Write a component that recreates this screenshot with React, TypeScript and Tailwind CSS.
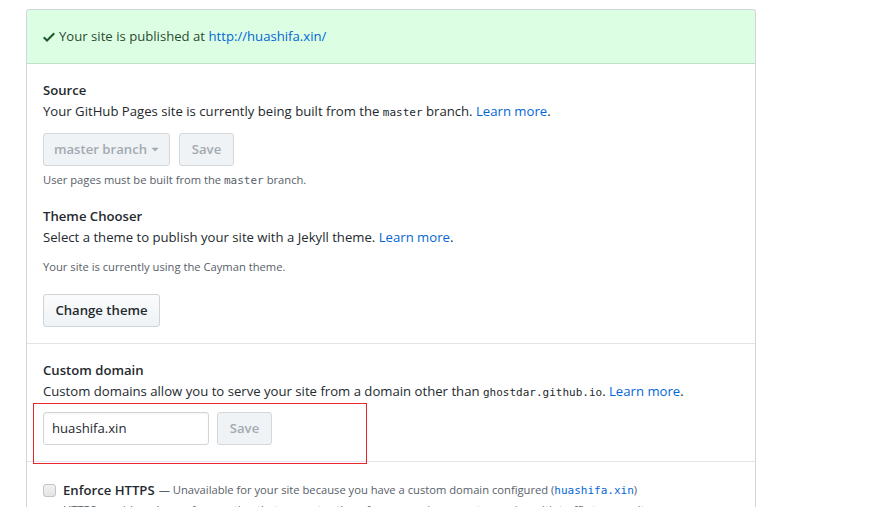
import React from "react";

const sans = { fontFamily: '"Open Sans", "Noto Sans", Arial, sans-serif' };

function Mono({ children, className = "" }: { children: React.ReactNode; className?: string }) {
  return (
    <span className={`font-['DejaVu_Sans_Mono',monospace] text-[11px] ${className}`}>{children}</span>
  );
}

function Check() {
  return (
    <svg width="12" height="16" viewBox="0 0 12 16" className="inline-block mr-[4px]" aria-hidden>
      <path d="M12 5l-8 8-4-4 1.5-1.5L4 10l6.5-6.5L12 5z" fill="#1d5a2a" />
    </svg>
  );
}

function Caret() {
  return (
    <svg width="8" height="16" viewBox="0 0 8 16" className="inline-block ml-[4px]" aria-hidden>
      <path d="M0 7l4 4 4-4H0z" fill="#a3aab1" transform="translate(0.5,-0.5) scale(0.9)" />
    </svg>
  );
}

export default function App() {
  return (
    <div className="min-h-[507px] bg-white pt-[9px] pl-[26px] text-[#24292e]" style={sans}>
      <div className="w-[730px] rounded-t-[3px] border border-[#d1d5da] border-b-0">
        {/* Flash */}
        <div className="flex items-center rounded-t-[3px] bg-[#dcffe4] border-b border-[#c2dfc8] px-4 py-4 text-[13.15px] leading-[21px] text-[#2c4a31]">
          <Check />
          <span>
            Your site is published at{" "}
            <span className="text-[#0366d6]">http://huashifa.xin/</span>
          </span>
        </div>

        {/* Source + Theme */}
        <div className="px-4 pt-4 pb-4 border-b border-[#e1e4e8]">
          <div className="text-[13.15px] leading-[21px] font-semibold">Source</div>
          <div className="text-[13.15px] leading-[21px]">
            Your GitHub Pages site is currently being built from the <Mono>master</Mono> branch.{" "}
            <span className="text-[#0366d6]">Learn more</span>.
          </div>
          <div className="mt-[10px] flex gap-[9px]">
            <div className="flex h-[33px] w-[127px] items-center justify-center rounded-[3px] border border-[#d5d8db] bg-[#eff3f6] text-[13.15px] font-semibold text-[#a3aab1]">
              master branch
              <Caret />
            </div>
            <div className="flex h-[33px] w-[55px] items-center justify-center rounded-[3px] border border-[#d5d8db] bg-[#eff3f6] text-[13.15px] font-semibold text-[#a3aab1]">
              Save
            </div>
          </div>
          <div className="mt-[5px] text-[11.2px] leading-[18px] text-[#586069]">
            User pages must be built from the <Mono>master</Mono> branch.
          </div>

          <div className="mt-[16px] text-[13.15px] leading-[21px] font-semibold">Theme Chooser</div>
          <div className="text-[13.15px] leading-[21px]">
            Select a theme to publish your site with a Jekyll theme.{" "}
            <span className="text-[#0366d6]">Learn more</span>.
          </div>
          <div className="mt-[10px] text-[11.2px] leading-[18px] text-[#586069]">
            Your site is currently using the Cayman theme.
          </div>
          <div className="mt-[18px] flex">
            <div className="flex h-[33px] w-[117px] items-center justify-center rounded-[3px] border border-[#d1d4d7] bg-gradient-to-b from-[#fafbfc] to-[#eff3f6] text-[13.15px] font-semibold text-[#24292e]">
              Change theme
            </div>
          </div>
        </div>

        {/* Custom domain */}
        <div className="relative px-4 pt-4 pb-4 border-b border-[#e1e4e8]">
          <div className="text-[13.15px] leading-[21px] font-semibold">Custom domain</div>
          <div className="text-[13.15px] leading-[21px]">
            Custom domains allow you to serve your site from a domain other than{" "}
            <Mono>ghostdar.github.io</Mono>. <span className="text-[#0366d6]">Learn more</span>.
          </div>
          <div className="mt-[9px] flex gap-[8px]">
            <div className="flex h-[33px] w-[166px] items-center rounded-[3px] border border-[#d1d5da] bg-white px-[8px] text-[13.15px] text-[#24292e] shadow-[inset_0_1px_2px_rgba(27,31,35,0.05)]">
              huashifa.xin
            </div>
            <div className="flex h-[33px] w-[55px] items-center justify-center rounded-[3px] border border-[#d5d8db] bg-[#eff3f6] text-[13.15px] font-semibold text-[#a3aab1]">
              Save
            </div>
          </div>
          <div className="pointer-events-none absolute left-[6px] top-[59px] z-10 h-[61px] w-[334px] border border-[#e8262b]" />
        </div>

        {/* Enforce HTTPS */}
        <div className="px-4 pt-[17px] pb-4">
          <div className="flex items-center">
            <span className="mr-[7px] inline-block h-[13px] w-[13px] rounded-[3px] border border-[#c4c4c4] bg-gradient-to-b from-[#f2f2f2] to-[#e4e4e4]" />
            <span className="text-[13.15px] leading-[21px] font-semibold">Enforce HTTPS</span>
            <span className="ml-[4px] text-[11.2px] leading-[21px] text-[#586069]">
              — Unavailable for your site because you have a custom domain configured (
              <Mono className="text-[#0366d6]">huashifa.xin</Mono>)
            </span>
          </div>
          <div className="pl-[20px] text-[11.2px] leading-[18px] text-[#586069]">
            HTTPS provides a layer of encryption that prevents others from snooping on or tampering with traffic to your site.
          </div>
        </div>
      </div>
    </div>
  );
}
